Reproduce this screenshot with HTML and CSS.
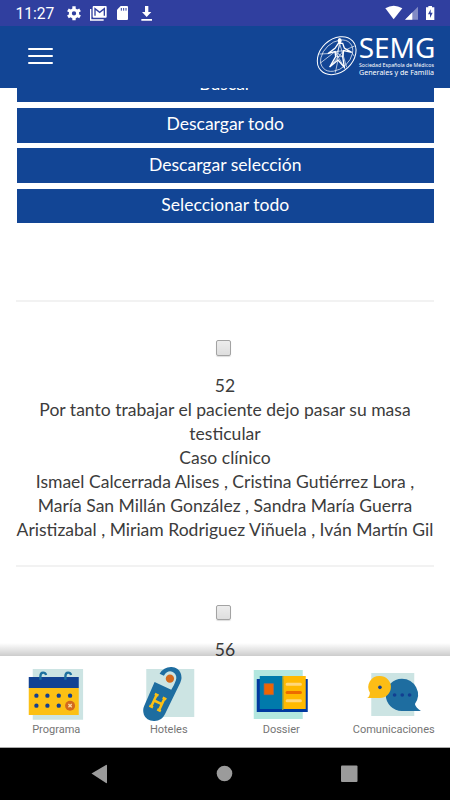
FILE: index.html
```html
<!DOCTYPE html>
<html lang="es">
<head>
    <meta charset="UTF-8">
    <meta name="viewport" content="width=device-width, initial-scale=1.0">
    <title>SEMG - Comunicaciones</title>
    <link rel="stylesheet" href="styles.css">
</head>
<body>
    <div class="status-bar">
        <span class="clock">11:27</span>
        <svg class="status-left" width="96" height="26" viewBox="192 0 288 78" fill="#fff">
            <circle cx="222" cy="40" r="11" fill="none" stroke="#fff" stroke-width="9"/>
            <path d="M222 19v8M222 53v8M203.800 29.500l7 4M233.200 46.500l7 4M203.800 50.500l7-4M233.200 33.500l7-4" stroke="#fff" stroke-width="10"/>
            <path d="M272 27v33h39" fill="none" stroke="#fff" stroke-width="4"/>
            <path d="M281 18h36q3 0 3 3v29q0 3-3 3h-36q-3 0-3-3v-29q0-3 3-3z"/>
            <path d="M285 47V26l14 11 14-11v21" fill="none" stroke="#303f9f" stroke-width="4"/>
            <path d="M362 18h19q3 0 3 3v36q0 3-3 3h-27q-3 0-3-3V29z"/>
            <path d="M364 24v8M371 24v8M378 24v8" stroke="#303f9f" stroke-width="3"/>
            <path d="M435 18h10v18h9l-14 15-14-15h9zM424 57h32v5h-32z"/>
        </svg>
        <svg class="status-right" width="54" height="26" viewBox="476 0 162 78" fill="#fff">
            <path d="M480 25q25-15 51 0l-26 33z"/>
            <path d="M578 20v39h-39z" opacity=".4"/>
            <path d="M561 37v22h-22z"/>
            <path d="M609 18h11v4h7v38h-25V22h7z"/>
            <path d="M616 28l-8 15h6v11l8-16h-6z" fill="#303f9f"/>
        </svg>
    </div>

    <header class="header">
        <button class="menu-toggle" aria-label="Menú">
            <span></span>
            <span></span>
            <span></span>
        </button>
        <svg class="logo" width="135" height="60" viewBox="0 0 405 180" fill="none" stroke="#fff">
            <g stroke-width="3">
                <ellipse cx="80" cy="83" rx="65" ry="49" transform="rotate(-43 80 83)"/>
                <ellipse cx="80" cy="83" rx="55" ry="39" transform="rotate(-43 80 83)" stroke-width="2"/>
                <path d="M85 46l-10 15-22 16 22-6 2 15-18 31 25-21 19 22-5-32 3-18 24 5-22-13-5-14z" stroke-width="4"/>
                <path d="M88 46l-7 50M91 46l-14 40 21 0 3-18-26 3 23 15M75 71L30 106M101 68l33-14M59 117l42-49M103 118L75 71M90 50l20 68M84 96l-8 38M28 78l25-1M125 73l8 12" stroke-width="2"/>
            </g>
            <ellipse cx="89" cy="38" rx="6" ry="8" fill="#fff" stroke="none"/>
            <g class="logo-text" fill="#fff" stroke="none">
                <text class="logo-name" x="146" y="90" textLength="230" lengthAdjust="spacingAndGlyphs">SEMG</text>
                <text class="logo-line" x="147" y="116" textLength="225" lengthAdjust="spacingAndGlyphs">Sociedad Española de Médicos</text>
                <text class="logo-line logo-line-big" x="147" y="141" textLength="225" lengthAdjust="spacingAndGlyphs">Generales y de Familia</text>
            </g>
        </svg>
    </header>

    <main class="content">
        <div class="buttons">
            <button class="btn">Buscar</button>
            <button class="btn">Descargar todo</button>
            <button class="btn">Descargar selección</button>
            <button class="btn">Seleccionar todo</button>
        </div>

        <article class="item">
            <input type="checkbox" class="item-check" aria-label="Seleccionar 52">
            <div>52</div>
            <div>Por tanto trabajar el paciente dejo pasar su masa testicular</div>
            <div>Caso clínico</div>
            <div>Ismael Calcerrada Alises , Cristina Gutiérrez Lora , María San Millán González , Sandra María Guerra Aristizabal , Miriam Rodriguez Viñuela , Iván Martín Gil</div>
        </article>

        <article class="item">
            <input type="checkbox" class="item-check" aria-label="Seleccionar 56">
            <div>56</div>
        </article>
    </main>

    <nav class="tabs">
        <a class="tab">
            <svg viewBox="-11.25 0 270 195">
                <path d="M54 27h151v152H54z" fill="#cce4e3"/>
                <path d="M42 83h150v82H42z" fill="#fcc014"/>
                <path d="M42 51h150v33H42z" fill="#124292"/>
                <path d="M77 59V49q0-11 8-11 7 0 9 7M152 59V49q0-11 8-11 7 0 9 7" fill="none" stroke="#1e719f" stroke-width="7"/>
                <g fill="#123f91">
                    <circle cx="65" cy="107" r="6.500"/><circle cx="98" cy="107" r="6.500"/><circle cx="132" cy="107" r="6.500"/><circle cx="166" cy="107" r="6.500"/>
                    <circle cx="65" cy="137" r="6.500"/><circle cx="98" cy="137" r="6.500"/><circle cx="132" cy="137" r="6.500"/>
                </g>
                <circle cx="166" cy="137" r="15" fill="#d2691e"/>
                <path d="M161 132l10 10M171 132l-10 10" stroke="#fbdca0" stroke-width="4"/>
            </svg>
            <span>Programa</span>
        </a>
        <a class="tab">
            <svg viewBox="-18.75 0 270 195">
                <path d="M48 27h144v144H48z" fill="#cce4e3"/>
                <path d="M73 66l50 23q10-15 14-28 4-13-5-22-11-9-22-2-6 4-9 10L88 41q13-21 36-20 20 2 27 18 6 14-1 29L104 163q-10 21-33 20-23-1-30-19-5-14 1-27z" fill="#1e6da0"/>
                <circle cx="119" cy="56" r="12.500" fill="#d2691e"/>
                <path d="M70 105v45M96 105v45M70 127h26M64 108h12M90 108h12M64 147h12M90 147h12" transform="rotate(25 83 127)" fill="none" stroke="#fcc014" stroke-width="7.500"/>
            </svg>
            <span>Hoteles</span>
        </a>
        <a class="tab">
            <svg viewBox="-11.25 0 270 195">
                <path d="M42 30h147v147H42z" fill="#b3e7df"/>
                <path d="M51 57h153v99H51z" fill="#0039a0"/>
                <path d="M60 48h70v99H60z" fill="#007aab"/>
                <path d="M130 48h68v99h-68z" fill="#ffb900"/>
                <path d="M129 48v102" stroke="#8da347" stroke-width="4"/>
                <path d="M73 71h28v33H73z" fill="#ee6500" stroke="#ad6553" stroke-width="2"/>
                <path d="M142 73h40M142 122h40" stroke="#ffd77b" stroke-width="9" stroke-linecap="round"/>
                <path d="M142 97.500h40" stroke="#ed6b00" stroke-width="9" stroke-linecap="round"/>
            </svg>
            <span>Dossier</span>
        </a>
        <a class="tab">
            <svg viewBox="-18.75 0 270 195">
                <path d="M48 39h129v129H48z" fill="#cce4e3"/>
                <path d="M140 56a48 48 0 0 1 39 76q2 11 18 21h-57a48.500 48.500 0 0 1 0-97z" fill="#1e6da0"/>
                <path d="M74 48a33 33 0 1 1 0 66H35q8-3 9-16A33 33 0 0 1 74 48z" fill="#fcbd16"/>
                <g fill="#123f91">
                    <circle cx="74" cy="82" r="5.500"/><circle cx="118" cy="105" r="5.500"/><circle cx="141" cy="105" r="5.500"/><circle cx="163" cy="105" r="5.500"/>
                </g>
            </svg>
            <span>Comunicaciones</span>
        </a>
    </nav>

    <div class="system-nav">
        <svg width="450" height="52" viewBox="0 0 450 52" fill="#9b9b9b">
            <path d="M91.500 25.500L106 17q1-.5 1 .5v17q0 1-1 .5z"/>
            <circle cx="224.500" cy="25.500" r="7.800"/>
            <rect x="341" y="17.500" width="16.500" height="16.500" rx="1"/>
        </svg>
    </div>
</body>
</html>
```

FILE: styles.css
```css
* {
    box-sizing: border-box;
}
body {
    margin: 0;
    height: 800px;
    display: flex;
    flex-direction: column;
    overflow: hidden;
    background: #fff;
    color: #3c3c3c;
    font-family: Lato, sans-serif;
    font-size: 17.55px;
    line-height: 24.1px;
}

/* Android status bar */
.status-bar {
    flex: none;
    display: flex;
    align-items: center;
    height: 26px;
    padding: 0 12px 0 15.5px;
    background: #303f9f;
    color: #fff;
}
.clock {
    width: 48.5px;
    padding-top: 2px;
    font: 400 15.6px/26px Roboto, sans-serif;
}
.status-right {
    margin-left: auto;
}

/* App header */
.header {
    flex: none;
    display: flex;
    justify-content: space-between;
    align-items: flex-start;
    height: 62px;
    padding: 2px 5px 0 28px;
    background: #124595;
}
.menu-toggle {
    display: flex;
    flex-direction: column;
    gap: 5px;
    width: 25px;
    margin-top: 20px;
    padding: 0;
    border: none;
    background: transparent;
}
.menu-toggle span {
    height: 2px;
    border-radius: 1px;
    background: #fff;
}
.logo-text {
    font-family: "Noto Sans", sans-serif;
}
.logo-name {
    font-size: 84px;
}
.logo-line {
    font-size: 16px;
}
.logo-line-big {
    font-size: 23px;
}

/* Scrolled list */
.content {
    flex: 1;
    min-height: 0;
    padding: 0 16px;
    overflow: hidden;
    text-align: center;
}
.buttons {
    display: grid;
    gap: 5.6px;
    margin-top: -20.6px;
    padding: 0 0 77px 0.5px;
}
.btn {
    height: 34.8px;
    padding: 0 0 2px;
    border: none;
    background: #124595;
    color: #fff;
    font: inherit;
}
.item {
    border-top: 2px solid #f2f2f2;
    padding-bottom: 22.3px;
}
.item-check {
    appearance: none;
    display: block;
    width: 15.5px;
    height: 15.5px;
    margin: 38px auto 18px 199.5px;
    border: 1px solid #a3a3a3;
    border-radius: 2px;
    background: linear-gradient(#ededed, #dedede);
    box-shadow: 0 1px 1px #ddd;
}

/* Bottom tabs */
.tabs {
    position: relative;
    flex: none;
    display: grid;
    grid-template-columns: repeat(4, 1fr);
    height: 92px;
    padding-top: 4px;
    border-bottom: 1px solid #aaa;
    background: #fff;
}
.tabs::before {
    content: "";
    position: absolute;
    left: 0;
    right: 0;
    bottom: 100%;
    height: 13px;
    background: linear-gradient(rgba(0,0,0,0), rgba(0,0,0,0.2));
}
.tab {
    display: flex;
    flex-direction: column;
    align-items: center;
    color: #757575;
    font: 11px/16px Roboto, sans-serif;
}
.tab svg {
    width: 90px;
    height: 65px;
    margin-bottom: -3px;
}

.system-nav {
    flex: none;
    height: 52px;
    background: #000;
}
.system-nav svg {
    display: block;
}
```
